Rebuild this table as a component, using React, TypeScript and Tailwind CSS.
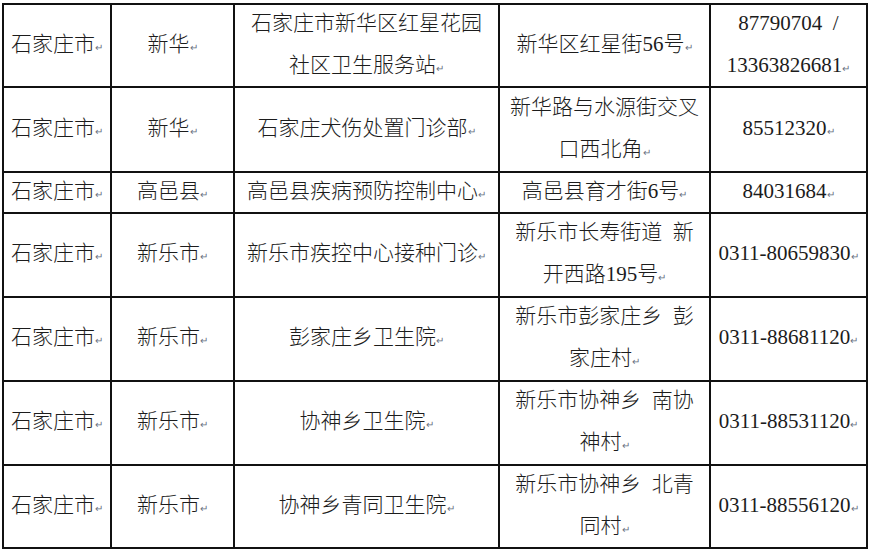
import React from "react";

const M = () => <span className="text-[10px] text-gray-500 align-baseline">↵</span>;

type Cell = string[];
const rows: { h: string; cells: Cell[] }[] = [
  { h: "h-[83px]", cells: [["石家庄市"], ["新华"], ["石家庄市新华区红星花园", "社区卫生服务站"], ["新华区红星街56号"], ["87790704\u00a0\u00a0/", "13363826681"]] },
  { h: "h-[85px]", cells: [["石家庄市"], ["新华"], ["石家庄犬伤处置门诊部"], ["新华路与水源街交叉", "口西北角"], ["85512320"]] },
  { h: "h-[41px]", cells: [["石家庄市"], ["高邑县"], ["高邑县疾病预防控制中心"], ["高邑县育才街6号"], ["84031684"]] },
  { h: "h-[84px]", cells: [["石家庄市"], ["新乐市"], ["新乐市疾控中心接种门诊"], ["新乐市长寿街道\u00a0\u00a0新", "开西路195号"], ["0311-80659830"]] },
  { h: "h-[84px]", cells: [["石家庄市"], ["新乐市"], ["彭家庄乡卫生院"], ["新乐市彭家庄乡\u00a0\u00a0彭", "家庄村"], ["0311-88681120"]] },
  { h: "h-[84px]", cells: [["石家庄市"], ["新乐市"], ["协神乡卫生院"], ["新乐市协神乡\u00a0\u00a0南协", "神村"], ["0311-88531120"]] },
  { h: "h-[83px]", cells: [["石家庄市"], ["新乐市"], ["协神乡青同卫生院"], ["新乐市协神乡\u00a0\u00a0北青", "同村"], ["0311-88556120"]] },
];

export default function App() {
  return (
    <div className="w-[869px] h-[552px] bg-white pt-[3px] pl-[2px] overflow-hidden font-['Liberation_Serif','Noto_Sans_CJK_SC',serif] text-[21px] text-[#1c1c1c] font-light">
      <table className="table-fixed border-collapse w-[864px]">
        <colgroup>
          <col className="w-[108px]" />
          <col className="w-[123px]" />
          <col className="w-[265px]" />
          <col className="w-[211px]" />
          <col className="w-[157px]" />
        </colgroup>
        <tbody>
          {rows.map((r, i) => (
            <tr key={i} className={r.h}>
              {r.cells.map((c, j) => (
                <td key={j} className="border-2 border-[#111] text-center align-middle p-0 whitespace-nowrap overflow-visible">
                  <div className="leading-[42px] -my-[4px]">
                    {c.map((line, k) => (
                      <div key={k}>
                        {line}
                        {k === c.length - 1 && <M />}
                      </div>
                    ))}
                  </div>
                </td>
              ))}
            </tr>
          ))}
        </tbody>
      </table>
    </div>
  );
}
